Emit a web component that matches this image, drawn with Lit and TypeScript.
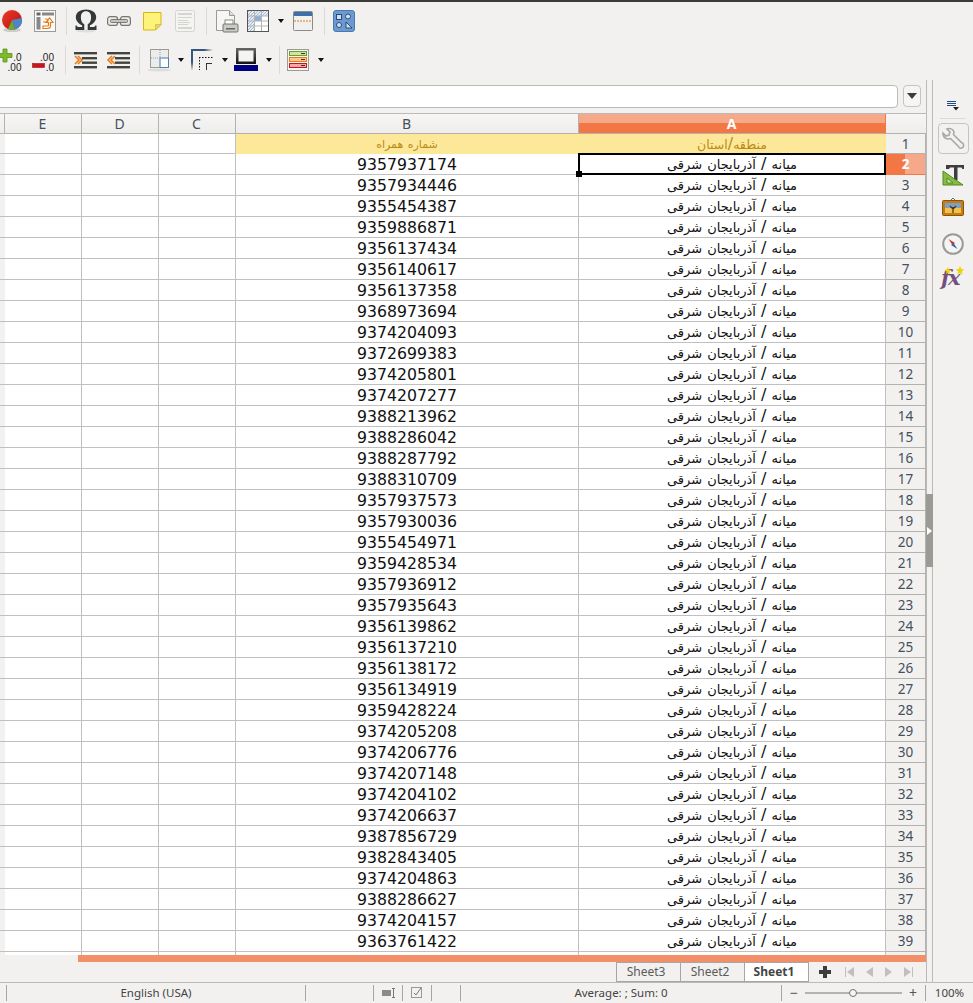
import { LitElement, html, css, svg } from "lit";
import { customElement } from "lit/decorators.js";

const PHONES = "9357937174 9357934446 9355454387 9359886871 9356137434 9356140617 9356137358 9368973694 9374204093 9372699383 9374205801 9374207277 9388213962 9388286042 9388287792 9388310709 9357937573 9357930036 9355454971 9359428534 9357936912 9357935643 9356139862 9356137210 9356138172 9356134919 9359428224 9374205208 9374206776 9374207148 9374204102 9374206637 9387856729 9382843405 9374204863 9388286627 9374204157 9363761422".split(" ");

const ic = (w: number, h: number, body: unknown) => html`<svg width=${w} height=${h} viewBox="0 0 ${w} ${h}">${body}</svg>`;

const pie = ic(22, 24, svg`<defs><linearGradient id="rd" x1="0" y1="0" x2="1" y2="1"><stop offset="0" stop-color="#ee3a2a"/><stop offset="1" stop-color="#b50f0f"/></linearGradient></defs>
<ellipse cx="11" cy="21" rx="9" ry="2" fill="#ccc"/><circle cx="11" cy="11" r="10" fill="url(#rd)"/><path d="M11 11 L21 9 A10 10 0 0 1 14 20.6 Z" fill="#4d86c6"/><path d="M11 11 L14 20.6 A10 10 0 0 1 7 20 Z" fill="#6cab2c"/>`);
const ins = ic(22, 22, svg`<rect x=".5" y=".5" width="21" height="21" fill="#fafafa" stroke="#9a9a96"/><rect x="2.500" y="2.500" width="4" height="3" fill="#666"/><rect x="8" y="2.500" width="12" height="3" fill="#888"/><rect x="2.500" y="7" width="4" height="12.500" fill="#888"/><path d="M9 18.500h4.500a3 3 0 0 0 3-3v-3h2.500l-3.500-4.500-3.500 4.500h2.500v2.500a1 1 0 0 1-1 1H9z" fill="#fff" stroke="#e77c18" stroke-width="1.200"/><path d="M9 12h3.500a1.500 1.500 0 0 0 0-3H11" fill="none" stroke="#e77c18" stroke-width="1.200"/>`);
const omega = ic(22, 24, svg`<ellipse cx="11" cy="22" rx="10" ry="1.5" fill="#ddd"/><path d="M.5 21v-4.500h1.200c.4 1 1 1.500 2 1.500h3.400v-1.800C3.600 14.800.8 11.800.8 8.200.8 3.400 5.300.6 11 .6s10.200 2.800 10.200 7.600c0 3.600-2.800 6.600-6.300 8v1.800h3.400c1 0 1.600-.5 2-1.500h1.200V21h-8.800v-5.800c2.200-1.200 3.400-3.600 3.400-6.800 0-3.800-1.700-6.100-5.100-6.100S5.900 4.600 5.900 8.400c0 3.200 1.200 5.600 3.400 6.800V21z" fill="#33393b"/>`);
const chain = ic(24, 14, svg`<g fill="#ecebe8" stroke="#77776f" stroke-width="1.200"><rect x=".6" y="2.600" width="10" height="8.800" rx="2.500"/><rect x="13.400" y="2.600" width="10" height="8.800" rx="2.500"/></g><rect x="3.500" y="5.500" width="17" height="3" rx="1" fill="#c4c3bf" stroke="#66665f" stroke-width=".8"/>`);
const note = ic(19, 19, svg`<path d="M.5.500h17.500v12l-5.500 5.500H.5z" fill="#fdf27a" stroke="#d8b70d"/><path d="M18 12.500h-5.500V18z" fill="#e7d66a" stroke="#c9b84a" stroke-width=".7"/>`);
const docIcon = ic(20, 22, svg`<rect x=".5" y=".5" width="19" height="21" rx="2" fill="#f4f4f2" stroke="#d4d4d0"/><g fill="#d5d5d1"><rect x="3" y="3" width="14" height="2"/><rect x="3" y="7" width="14" height="1"/><rect x="3" y="10" width="10" height="1"/><rect x="3" y="12" width="12" height="1"/><rect x="3" y="14" width="10" height="1"/><rect x="3" y="17" width="14" height="2"/></g>`);
const preview = ic(24, 24, svg`<path d="M1.500 1.500h13l5 5v15h-18z" fill="#f6f6f4" stroke="#9a9a96"/><path d="M14.500 1.500v5h5" fill="#ddd" stroke="#9a9a96"/><rect x="10" y="11" width="8" height="5" fill="#fff" stroke="#888"/><rect x="8" y="15" width="15" height="8" rx="1" fill="#c9c9c6" stroke="#77776f"/><rect x="11" y="19" width="9" height="1.500" fill="#666"/>`);
const tableI = ic(22, 22, svg`<defs><pattern id="ht" width="3" height="3" patternUnits="userSpaceOnUse"><rect width="3" height="3" fill="#e6edf5"/><path d="M0 3L3 0" stroke="#8facd0" stroke-width=".8"/></pattern></defs>
<rect x=".5" y=".5" width="21" height="21" fill="#fff" stroke="#555"/><rect x="1" y="1" width="20" height="5" fill="url(#ht)"/><rect x="1" y="1" width="6" height="20" fill="url(#ht)"/><rect x="7.500" y="6" width="7" height="5" fill="#8eaed6"/><g stroke="#b5b5b1" fill="none"><path d="M7.500 1v20M14.500 1v20M1 6h20M1 11h20M1 16h20"/></g>`);
const headerI = ic(20, 20, svg`<rect x=".5" y=".5" width="19" height="19" rx="1" fill="#f0f0ee" stroke="#8a8a86"/><rect x="1" y="1" width="18" height="4" fill="#3f6fa8"/><path d="M1 10h18" stroke="#e8791c" stroke-dasharray="2 1"/>`);
const shapes = ic(22, 22, svg`<rect x=".5" y=".5" width="21" height="21" rx="2.500" fill="#6c9ad0" stroke="#4a78b0"/><g fill="#cfe0f3" stroke="#1f3f6a" stroke-width=".9"><rect x="3.500" y="4.500" width="5" height="5"/><circle cx="15" cy="6.500" r="2.500"/><circle cx="6" cy="15" r="2.500"/><path d="M13 12v6h6z"/></g>`);
const addDec = ic(22, 24, svg`<path d="M-1 5.500h4V1h4v4.500h5v4H7V14H3V9.500h-4z" fill="#7dbb2a" stroke="#5c9218" stroke-width=".8"/><text x="21.500" y="13" text-anchor="end" class="dec">.0</text><text x="21.500" y="23" text-anchor="end" class="dec">.00</text>`);
const delDec = ic(22, 24, svg`<text x="22" y="13" text-anchor="end" class="dec">.00</text><rect x=".5" y="15.500" width="12" height="4" fill="#c8161d" stroke="#9f1015" stroke-width=".6"/><text x="22" y="23" text-anchor="end" class="dec">.0</text>`);
const bars = (y: number[], xs: number[]) => y.map((v, i) => svg`<rect x=${xs[i]} y=${v} width=${23 - xs[i]} height="2.400" fill="#44443f"/>`);
const indent = ic(23, 18, svg`${bars([1, 6, 10.5, 15], [0, 8, 8, 0])}<path d="M1 5l4 4-4 4M4 5l4 4-4 4" fill="none" stroke="#e77c18" stroke-width="1.600"/>`);
const outdent = ic(23, 18, svg`${bars([1, 6, 10.5, 15], [0, 8, 8, 0])}<path d="M7 5l-4 4 4 4M4 5l-4 4 4 4" transform="translate(1)" fill="none" stroke="#e77c18" stroke-width="1.600"/>`);
const borders = ic(24, 24, svg`<ellipse cx="12" cy="22" rx="12" ry="1.500" fill="#ddd"/><rect x="3.500" y="1.500" width="18" height="18" fill="#ececea" stroke="#9a9a96"/><path d="M13 2v8M4 10h9" stroke="#8aa0b5" stroke-dasharray="1 1"/><path d="M13.500 10.500h7.500v8.500h-7.500z" fill="#fff"/><path d="M13 19.500V10h8.500v9.500z" fill="none" stroke="#4a7fb8"/>`);
const borderStyle = ic(24, 24, svg`<defs><linearGradient id="bh" x1="0" x2="1"><stop offset=".6" stop-color="#38577f"/><stop offset="1" stop-color="#38577f" stop-opacity="0"/></linearGradient><linearGradient id="bv" x1="0" y1="0" x2="0" y2="1"><stop offset=".6" stop-color="#38577f"/><stop offset="1" stop-color="#38577f" stop-opacity="0"/></linearGradient></defs>
<rect x="0" y="1" width="22" height="2" fill="url(#bh)"/><rect x="0" y="1" width="2" height="22" fill="url(#bv)"/><path d="M8 9.500h14M8.500 9v13" stroke="#111" stroke-dasharray="1.500 1.500"/><path d="M15 15.500h6M15.500 15v7" stroke="#333"/>`);
const borderColor = ic(24, 24, svg`<defs><linearGradient id="bc" x1="0" y1="0" x2="0" y2="1"><stop offset="0" stop-color="#666"/><stop offset="1" stop-color="#111"/></linearGradient></defs><rect x="2" y="0" width="20" height="16" fill="url(#bc)"/><rect x="4.500" y="2.500" width="15" height="11" fill="#f4f4f2"/><rect x="0" y="17" width="24" height="6" fill="#000080"/>`);
const cond = ic(22, 22, svg`<rect x=".5" y=".5" width="21" height="21" fill="#f5f5f3" stroke="#9a9a96"/><rect x="2.500" y="2.500" width="17" height="4" fill="#cde6a8" stroke="#6f9b30"/><rect x="2.500" y="8.500" width="17" height="4" fill="#fbc98c" stroke="#e77c18"/><rect x="2.500" y="14.500" width="17" height="4" fill="#f8a5a5" stroke="#c8161d"/><path d="M14 4.500h4M14 10.500h4M14 16.500h4" stroke="#333"/>`);

const row1: Array<[number, unknown?]> = [[1], [22, pie], [11], [22, ins], [10], [1, "s"], [8], [22, omega], [10], [24, chain], [12], [19, note], [13], [20, docIcon], [11], [1, "s"], [8], [24, preview], [8], [22, tableI], [8], [7, "a"], [9], [20, headerI], [11], [1, "s"], [8], [22, shapes]];
const row2: Array<[number, unknown?]> = [[22, addDec], [10], [22, delDec], [11], [1, "s"], [8], [23, indent], [10], [23, outdent], [9], [1, "s"], [7], [24, borders], [6], [7, "a"], [7], [24, borderStyle], [6], [7, "a"], [6], [24, borderColor], [7], [7, "a"], [7], [1, "s"], [7], [22, cond], [8], [7, "a"]];

const spanner = ic(24, 24, svg`<path d="M2 6l3 3 3-1 1-3-3-3c3-1 6 0 7 3l-.5 2.500 8 8c2.500 1 2.500 3 1.500 4.500s-3.500 2-4.500-.5l-8-8-2.500.5C4 12 1.500 9 2 6z" fill="#f2f1f0" stroke="#a8a8a4" stroke-width="1.600"/>`);
const styleI = ic(23, 22, svg`<path d="M4 1h18v4h-1.500l-1-1.500h-4V16H12V3.500H8L7 5H4z" fill="#3b3f3f"/><path d="M1 7l20 14H1z" fill="#86bc45" stroke="#4e8a1e"/><path d="M5 14l6 5H5z" fill="#cfe6a8" stroke="#4e8a1e"/>`);
const gallery = ic(22, 20, svg`<path d="M8 4l3-3 3 3" fill="none" stroke="#666"/><rect x=".5" y="3.500" width="21" height="15" rx="1" fill="#c67c12" stroke="#8c5505"/><rect x="3" y="6" width="16" height="10" fill="#f2c14d"/><rect x="3" y="6" width="16" height="5" fill="#7f9fc4"/><path d="M11 16v-6M11 12l-3-3M11 12l3-3" stroke="#4a3216" stroke-width="1.200"/>`);
const compass = ic(22, 22, svg`<circle cx="11" cy="11" r="9.800" fill="#f4f4f2" stroke="#9a9a96" stroke-width="2"/><path d="M6.500 6l6.500 4-2.500 2z" fill="#d2302b"/><path d="M15.500 16l-6.500-4 2.500-2z" fill="#3465a4"/>`);
const fx = html`<span class="fx">fx<svg class="stars" width="22" height="10" viewBox="0 0 22 10"><path d="M5 1l1 2.500 2.500.5L6.500 5.500 7 8 5 6.800 3 8l.5-2.500L1.500 4 4 3.500z" fill="#edd400"/><path d="M17 0l1.200 3 3 .4-2.300 2 .7 3L17 7l-2.600 1.400.7-3-2.300-2 3-.4z" fill="#edd400"/></svg></span>`;

const place = html`میانه <span class="sl">/</span> آذربایجان شرقی`;
const headA = html`منطقه<span class="sl">/</span>استان`;

@customElement("app-root")
export class AppRoot extends LitElement {
  static styles = css`
    :host { display: block; width: 973px; height: 1003px; overflow: hidden; background: #f2f1f0; position: relative; font-family: "Noto Sans", sans-serif; color: #3c3c3c; }
    .top { height: 2px; background: #3c3b37; }
    .tools { height: 78px; overflow: hidden; }
    .tb { display: flex; align-items: center; height: 38px; }
    .tb + .tb { height: 40px; }
    .tb > div { flex: none; display: flex; align-items: center; justify-content: center; }
    .tb svg { flex: none; overflow: visible; }
    .sep { width: 1px; height: 28px; background: #dcdad7; flex: none; }
    .arrow { width: 0; height: 0; border-left: 3.500px solid transparent; border-right: 3.500px solid transparent; border-top: 4px solid #111; }
    .dec { font: 10px "Liberation Sans", sans-serif; fill: #222; }
    .body { display: flex; height: 923px; }
    .main { width: 926px; flex: none; display: flex; flex-direction: column; position: relative; }
    .fbar { height: 33px; display: flex; align-items: flex-start; padding-top: 5px; box-sizing: border-box; gap: 5px; }
    .input { margin-left: -10px; width: 908px; height: 23px; box-sizing: border-box; background: #fff; border: 1px solid #bcbab6; border-radius: 4px; }
    .drop { width: 18px; height: 22px; box-sizing: border-box; border: 1px solid #c6c4c0; border-radius: 4px; background: #f6f5f4; display: flex; align-items: center; justify-content: center; }
    .drop i { border-left: 5px solid transparent; border-right: 5px solid transparent; border-top: 6px solid #3c3c3c; }
    .grid { height: 842px; overflow: hidden; display: grid; grid-template-columns: 5px 77px 77px 77px 343px 307px 40px; grid-template-rows: 20px 20px; grid-auto-rows: 21px; background: #fff; position: relative; border-top: 1px solid #bcbab6; box-sizing: border-box; }
    .c { border-right: 1px solid #c0c0c0; border-bottom: 1px solid #c0c0c0; box-sizing: border-box; text-align: center; white-space: nowrap; overflow: hidden; font: 15.700px/21px "DejaVu Sans", sans-serif; color: #111; }
    .ch, .rh { background: #f2f1f0; font: 13px/19px "Noto Sans", sans-serif; color: #44505c; border-right: 1px solid #b4b2ae; border-bottom: 1px solid #b4b2ae; }
    .rh { line-height: 20px; font-size: 13.500px; }
    .ch { background: linear-gradient(#f7f6f5, #eeedec); padding-right: 1px; font-size: 14px; }
    .ch.sel { background: linear-gradient(#f6a98a 0 50%, #f27744 50%); color: #fff; font-weight: 700; border-right-color: #f27744; }
    .rh.sel { background: linear-gradient(90deg, #f27744 0 50%, #f6a98a 50%); color: #fff; font-weight: 700; border-bottom: 1px solid #f27744; line-height: 20px; }
    .corner { border-right: 0; background: #f2f1f0; }
    .fa { font-size: 13px; line-height: 21px; word-spacing: 1px; }
    .sl { font-size: 16px; line-height: 1; }
    .head { background: #fde89a; color: #b98a18; font-size: 12.500px; border-color: #fde89a; line-height: 21px; }
    .headb { font-size: 11px; word-spacing: 1px; }
    .cursor { position: absolute; left: 578px; top: 39px; width: 307.500px; height: 22px; box-sizing: border-box; border: 2px solid #000; pointer-events: none; }
    .cursor i { position: absolute; left: -4px; bottom: -4px; width: 6px; height: 6px; background: #000; }
    .hs { height: 7px; display: flex; }
    .hs b { margin-left: 78px; flex: 1; background: #f28e68; }
    .tabs { height: 20px; display: flex; align-items: stretch; padding-left: 616px; font-size: 12px; }
    .tab { width: 65px; box-sizing: border-box; border: 1px solid #a8a6a2; margin-right: -1px; padding-right: 5px; text-align: center; line-height: 18px; color: #5a5a58; background: #f2f1f0; }
    .tab.on { background: #fff; font-weight: 700; color: #444; }
    .nav { display: flex; align-items: center; margin-left: 10px; }
    .nav svg { flex: none; }
    .plus { margin-right: 9px; }
    .rail { width: 7px; flex: none; box-sizing: border-box; border-left: 1px solid #bcbab6; border-right: 1px solid #bcbab6; background: #f2f1f0; position: relative; }
    .handle { position: absolute; left: -1px; top: 414px; width: 7px; height: 73px; background: #9c9a94; display: flex; align-items: center; justify-content: center; }
    .handle i { border-left: 5px solid #fff; border-top: 4px solid transparent; border-bottom: 4px solid transparent; }
    .side { flex: 1; display: flex; flex-direction: column; align-items: center; padding-top: 14px; }
    .menu { height: 10px; margin-bottom: 14px; }
    .rule { width: 26px; height: 1px; background: #dcdad7; margin-bottom: 4px; }
    .sbtn { width: 31px; height: 31px; box-sizing: border-box; border: 1px solid #c6c4c0; border-radius: 4px; display: flex; align-items: center; justify-content: center; margin-bottom: 10px; }
    .si { height: 22px; margin-bottom: 11px; display: flex; align-items: center; }
    .si.g { height: 20px; margin-bottom: 16px; }
    .si.k { margin-bottom: 12px; }
    .fx { position: relative; font: italic 700 21px/22px "DejaVu Serif", serif; color: #75507b; letter-spacing: -2px; display: block; width: 24px; height: 22px; }
    .stars { position: absolute; left: 2px; top: -1px; }
    .status { height: 21px; box-sizing: border-box; border-top: 1px solid #bcbab6; display: flex; align-items: center; font-size: 11.500px; color: #444; position: absolute; left: 0; right: 0; bottom: 0; background: #f2f1f0; }
    .st { flex: none; height: 16px; line-height: 16px; border-left: 1px solid #a8a6a2; box-sizing: border-box; text-align: center; display: flex; align-items: center; justify-content: center; }
    .zoomctl { display: flex; align-items: center; gap: 4px; font-size: 14px; color: #555; }
    .track { width: 97px; height: 2px; background: #b4b2ae; position: relative; margin: 0 3px; }
    .thumb { position: absolute; left: 44px; top: -3px; width: 8px; height: 8px; box-sizing: border-box; border: 1px solid #77756f; border-radius: 50%; background: #f6f5f4; }
  `;

  private tb(items: Array<[number, unknown?]>) {
    return html`<div class="tb">${items.map(([w, c]) =>
      c === "s" ? html`<div style="width:${w}px"><div class="sep"></div></div>`
      : c === "a" ? html`<div style="width:${w}px"><div class="arrow"></div></div>`
      : html`<div style="width:${w}px">${c ?? ""}</div>`)}</div>`;
  }

  private rowCells(n: number | string, a: unknown, b: unknown, aCls = "fa", bCls = "") {
    return html`<div class="c corner"></div><div class="c"></div><div class="c"></div><div class="c"></div>
      <div class="c ${bCls}">${b}</div>
      <div class="c ${aCls}" dir="rtl">${a}</div>
      <div class="c rh ${n === 2 ? "sel" : ""}">${n}</div>`;
  }

  render() {
    const navI = (d: string) => html`<svg width="19" height="12" viewBox="0 0 19 12"><path d=${d} fill="#c0bfbb"/></svg>`;
    return html`
      <div class="top"></div>
      <div class="tools">${this.tb(row1)}${this.tb(row2)}</div>
      <div class="body">
        <div class="main">
          <div class="fbar"><div class="input"></div><div class="drop"><i></i></div></div>
          <div class="grid">
            <div class="c ch"></div>
            <div class="c ch">E</div><div class="c ch">D</div><div class="c ch">C</div><div class="c ch">B</div>
            <div class="c ch sel">A</div><div class="c ch" style="border-right:0"></div>
            ${this.rowCells(1, headA, "شماره همراه", "head", "head headb")}
            ${PHONES.map((p, i) => this.rowCells(i + 2, place, p))}
            ${this.rowCells("", "", "")}
            <div class="cursor"><i></i></div>
          </div>
          <div class="hs"><b></b></div>
          <div class="tabs">
            <div class="tab">Sheet3</div><div class="tab">Sheet2</div><div class="tab on">Sheet1</div>
            <div class="nav">
              <svg class="plus" width="14" height="14" viewBox="0 0 14 14"><path d="M5 1h4v4h4v4H9v4H5V9H1V5h4z" fill="#3c3c3c"/></svg>
              ${navI("M4 1v10h1V1zM13 1l-7 5 7 5z")}
              ${navI("M13 1l-7 5 7 5z")}
              ${navI("M6 1l7 5-7 5z")}
              ${navI("M6 1l7 5-7 5zM14 1v10h1V1z")}
            </div>
          </div>
        </div>
        <div class="rail"><div class="handle"><i></i></div></div>
        <div class="side">
          <div class="menu"><svg width="12" height="10" viewBox="0 0 12 10"><path d="M0 .500h9M0 2.500h9M0 4.500h9" stroke="#204a87"/><path d="M6 6h6L9 9.500z" fill="#222"/></svg></div>
          <div class="rule"></div>
          <div class="sbtn">${spanner}</div>
          <div class="si">${styleI}</div>
          <div class="si g">${gallery}</div>
          <div class="si k">${compass}</div>
          <div class="si">${fx}</div>
        </div>
      </div>
      <div class="status">
        <div style="width:6px"></div>
        <div class="st" style="width:299px">English (USA)</div>
        <div class="st" style="width:68px"></div>
        <div class="st" style="width:29px"><svg width="13" height="12" viewBox="0 0 13 12"><rect y="3" width="9" height="6" fill="#8a8a86"/><path d="M10 1.500h3M11.500 1.500v9M10 10.500h3" stroke="#777" fill="none"/></svg></div>
        <div class="st" style="width:29px"><svg width="12" height="12" viewBox="0 0 12 12"><rect x=".5" y=".5" width="10" height="10" fill="none" stroke="#999"/><path d="M3 6l2 2 5-7" fill="none" stroke="#777"/></svg></div>
        <div class="st" style="width:29px"></div>
        <div class="st" style="width:321px">Average: ; Sum: 0</div>
        <div class="st" style="width:144px"><div class="zoomctl">−<div class="track"><div class="thumb"></div></div>+</div></div>
        <div class="st" style="flex:1">100%</div>
      </div>
    `;
  }
}
